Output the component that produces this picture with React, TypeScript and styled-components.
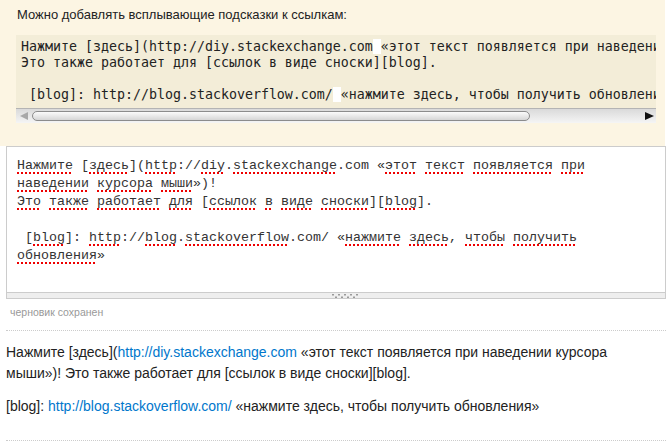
import React from 'react'
import styled, { createGlobalStyle } from 'styled-components'

const GlobalStyle = createGlobalStyle`
  html, body {
    margin: 0;
    padding: 0;
    background: #fff;
  }
  body {
    font-family: "Liberation Sans", Arial, sans-serif;
  }
`

const Page = styled.div`
  width: 671px;
  height: 448px;
  overflow: hidden;
`

const HelpPanel = styled.div`
  width: 665px;
  box-sizing: border-box;
  background: #fcf5e3;
  padding: 7px 0 23px;
`

const Intro = styled.p`
  margin: 0 0 12px 17px;
  font-size: 13px;
  line-height: 16px;
  color: #222;
`

const CodeBlock = styled.div`
  margin-left: 16px;
  width: 640px;
  background: #f3edd8;
`

const CodeText = styled.pre`
  margin: 0;
  padding: 4px 5px 5px;
  font-family: "DejaVu Sans Mono", monospace;
  font-size: 13.29px;
  line-height: 16px;
  color: #222;
  white-space: pre;
  overflow: hidden;
`

const Cell = styled.span`
  background: #fff;
`

const HScroll = styled.div`
  display: flex;
  align-items: center;
  gap: 4px;
  height: 14px;
  padding: 0 2px 0 4px;
  border-top: 1px solid #b4b4b4;
  background: linear-gradient(#dadada, #f5f5f5);
`

const Arrow = styled.span<{ $dir: 'left' | 'right'; $muted?: boolean }>`
  width: 0;
  height: 0;
  border-top: 4.5px solid transparent;
  border-bottom: 4.5px solid transparent;
  ${p =>
    p.$dir === 'left'
      ? `border-right: 8px solid ${p.$muted ? '#a8a8a8' : '#111'};`
      : `border-left: 9px solid ${p.$muted ? '#a8a8a8' : '#111'};`}
`

const Thumb = styled.div`
  width: 498px;
  height: 10px;
  box-sizing: border-box;
  border: 1px solid #8c8c8c;
  border-radius: 6px;
  background: linear-gradient(#fbfbfb, #d6d6d6);
`

const Track = styled.div`
  flex: 1;
`

const Editor = styled.div`
  margin-left: 6px;
  width: 660px;
  height: 146px;
  box-sizing: border-box;
  padding: 10px;
  border: 1px solid #ccc;
  border-bottom: none;
  background: #fff;
  font-family: "Liberation Mono", monospace;
  font-size: 13.33px;
  line-height: 18px;
  color: #333;
  white-space: pre-wrap;
`

const Typo = styled.span`
  padding-bottom: 1px;
  background-image: linear-gradient(90deg, #e00 50%, transparent 50%);
  background-size: 4px 2px;
  background-position: 0 100%;
  background-repeat: repeat-x;
`

const Grippie = styled.div`
  margin-left: 6px;
  width: 660px;
  height: 7px;
  box-sizing: border-box;
  border: 1px solid #ccc;
  background: #eee;
  display: flex;
  justify-content: center;
  align-items: center;
  padding-left: 20px;
`

const Status = styled.div`
  margin: 7px 0 0 10px;
  font-size: 10.5px;
  line-height: 13px;
  color: #999;
`

const Rule = styled.div<{ $gap: number }>`
  margin: ${p => p.$gap}px 0 0 6px;
  width: 660px;
  border-top: 1px dotted #ccc;
`

const Preview = styled.div`
  padding: 11px 6px 23px;
  font-size: 14px;
  line-height: 21px;
  color: #222;
`

const Para = styled.p`
  margin: 0 0 12px;
  &:last-child {
    margin-bottom: 0;
  }
`

const Link = styled.a`
  color: #0077cc;
  text-decoration: none;
`

const Grip = () => (
  <svg width="28" height="4" viewBox="0 0 28 4">
    {[0, 6, 12, 18, 24].map(x => (
      <rect key={'a' + x} x={x} y={0} width={2} height={1.5} fill="#999" />
    ))}
    {[3, 9, 15, 21].map(x => (
      <rect key={'b' + x} x={x} y={2.5} width={2} height={1.5} fill="#999" />
    ))}
  </svg>
)

const App: React.FC = () => (
  <Page>
    <GlobalStyle />
    <HelpPanel>
      <Intro>Можно добавлять всплывающие подсказки к ссылкам:</Intro>
      <CodeBlock>
        <CodeText>
          {'Нажмите [здесь](http://diy.stackexchange.com'}
          <Cell> </Cell>
          {'«этот текст появляется при наведении курсора мыши»)!\n'}
          {'Это также работает для [ссылок в виде сноски][blog].\n\n'}
          {' [blog]: http://blog.stackoverflow.com/'}
          <Cell> </Cell>
          {'«нажмите здесь, чтобы получить обновления»'}
        </CodeText>
        <HScroll>
          <Arrow $dir="left" $muted />
          <Thumb />
          <Track />
          <Arrow $dir="right" />
        </HScroll>
      </CodeBlock>
    </HelpPanel>
    <Editor>
      <Typo>Нажмите</Typo> [<Typo>здесь</Typo>](<Typo>http</Typo>://<Typo>diy</Typo>.<Typo>stackexchange</Typo>.com «<Typo>этот</Typo> <Typo>текст</Typo> <Typo>появляется</Typo> <Typo>при</Typo> <Typo>наведении</Typo> <Typo>курсора</Typo> <Typo>мыши</Typo>»)!{'\n'}
      <Typo>Это</Typo> <Typo>также</Typo> <Typo>работает</Typo> <Typo>для</Typo> [<Typo>ссылок</Typo> <Typo>в</Typo> <Typo>виде</Typo> <Typo>сноски</Typo>][<Typo>blog</Typo>].{'\n\n'}
      {' '}[<Typo>blog</Typo>]: <Typo>http</Typo>://<Typo>blog</Typo>.<Typo>stackoverflow</Typo>.com/ «<Typo>нажмите</Typo> <Typo>здесь</Typo>, <Typo>чтобы</Typo> <Typo>получить</Typo> <Typo>обновления</Typo>»
    </Editor>
    <Grippie>
      <Grip />
    </Grippie>
    <Status>черновик сохранен</Status>
    <Rule $gap={11} />
    <Preview>
      <Para>
        Нажмите [здесь](<Link href="#">http://diy.stackexchange.com</Link> «этот текст появляется при наведении курсора
        мыши»)! Это также работает для [ссылок в виде сноски][blog].
      </Para>
      <Para>
        [blog]: <Link href="#">http://blog.stackoverflow.com/</Link> «нажмите здесь, чтобы получить обновления»
      </Para>
    </Preview>
    <Rule $gap={0} />
  </Page>
)

export default App
